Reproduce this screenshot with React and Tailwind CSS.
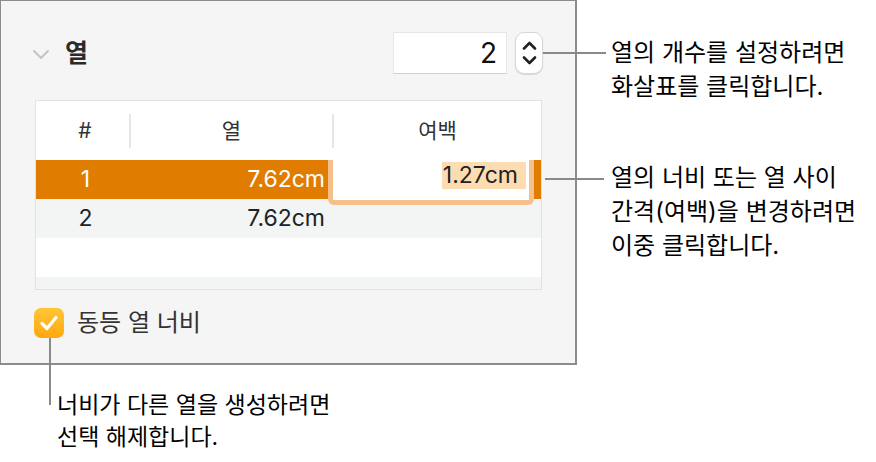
import React from "react";

const font = "font-['Inter','Noto_Sans_CJK_KR',sans-serif]";

function Chevron({ up }) {
  return (
    <svg width="15" height="9" viewBox="0 0 15 9" fill="none">
      <path
        d={up ? "M2 7.5 L7.5 2 L13 7.5" : "M2 1.5 L7.5 7 L13 1.5"}
        stroke="#222"
        strokeWidth="2.6"
        strokeLinecap="round"
        strokeLinejoin="round"
      />
    </svg>
  );
}

export default function App() {
  return (
    <div className={`relative w-[876px] h-[462px] bg-white flex ${font} text-[#222]`}>
      {/* Left column */}
      <div className="flex flex-col w-[600px]">
        <div className="w-[577px] h-[365px] bg-[#f5f5f5] border-t border-l border-r-2 border-b-2 border-[#8c8c8c] flex flex-col">
          {/* header */}
          <div className="flex items-center h-[42px] mt-[31px] pl-[31px] pr-[32px]">
            <svg width="18" height="11" viewBox="0 0 18 11" fill="none" className="mt-[2px]">
              <path d="M2 2 L9 9 L16 2" stroke="#c4c4c4" strokeWidth="2" strokeLinecap="round" strokeLinejoin="round" />
            </svg>
            <span className="ml-[15px] text-[25px] font-semibold text-[#2a2a2a] leading-none">열</span>
            <div className="flex-1" />
            <div className="w-[114px] h-[42px] bg-white border border-[#e6e6e6] border-b-[#cfcfcf] flex items-center justify-end pr-[9px] text-[28px] leading-none text-[#111]">
              2
            </div>
            <div className="ml-[8px] w-[28px] h-[42px] bg-white rounded-[9px] border border-[#d6d6d6] shadow-[0_1px_1px_rgba(0,0,0,0.12)] flex flex-col items-center justify-center gap-[6px]">
              <Chevron up />
              <Chevron />
            </div>
          </div>

          {/* table */}
          <div className="ml-[34px] mt-[26px] w-[507px] h-[190px] border border-[#e2e2e2] bg-white flex flex-col">
            <div className="h-[59px] flex items-center text-[21px] text-[#333]">
              <div className="w-[93px] text-center pl-[5px]">#</div>
              <div className="w-[2px] h-[34px] bg-[#e6e6e6]" />
              <div className="w-[201px] text-center">열</div>
              <div className="w-[2px] h-[34px] bg-[#e6e6e6]" />
              <div className="flex-1 text-center">여백</div>
            </div>
            <div className="h-[39px] flex items-center bg-[#e07c00] text-white text-[23px] relative">
              <div className="w-[93px] text-center pl-[6px]">1</div>
              <div className="w-[203px] text-right pr-[7px]">7.62cm</div>
              <div className="flex-1 relative h-full">
                <div className="absolute left-[-4px] top-0 w-[206px] h-[45px] border-l-[5px] border-r-[5px] border-b-[5px] border-[#f5c08c] rounded-b-[6px] bg-white z-10 flex items-start justify-end pr-[3px] pt-[2px]">
                  <span className="bg-[#fedcb2] text-[#222] h-[27px] flex items-center pl-[1px] pr-[8px]">1.27cm</span>
                </div>
              </div>
            </div>
            <div className="h-[39px] flex items-center bg-[#f3f4f4] text-[23px] text-[#222]">
              <div className="w-[93px] text-center pl-[6px]">2</div>
              <div className="w-[203px] text-right pr-[7px]">7.62cm</div>
            </div>
            <div className="h-[39px] bg-white" />
            <div className="flex-1 bg-[#f3f4f4]" />
          </div>

          {/* checkbox */}
          <div className="flex items-center ml-[33px] mt-[18px]">
            <div className="w-[30px] h-[30px] rounded-[7px] bg-gradient-to-b from-[#ffc634] to-[#ffa80a] flex items-center justify-center">
              <svg width="20" height="18" viewBox="0 0 20 18" fill="none">
                <path d="M3 9.5 L8 14.5 L17 3.5" stroke="white" strokeWidth="3.2" strokeLinecap="round" strokeLinejoin="round" />
              </svg>
            </div>
            <span className="ml-[13px] text-[24px] text-[#333] leading-none">동등 열 너비</span>
          </div>
        </div>

        <div className="mt-[24px] pl-[57px] text-[23px] leading-[32px] text-black">
          <div>너비가 다른 열을 생성하려면</div>
          <div>선택 해제합니다.</div>
        </div>
      </div>

      {/* Right annotations */}
      <div className="flex flex-col pl-[11px] text-[24px] leading-[34px] text-black">
        <div className="mt-[36px]">
          <div>열의 개수를 설정하려면</div>
          <div>화살표를 클릭합니다.</div>
        </div>
        <div className="mt-[57px]">
          <div>열의 너비 또는 열 사이</div>
          <div>간격(여백)을 변경하려면</div>
          <div>이중 클릭합니다.</div>
        </div>
      </div>

      {/* leader lines */}
      <div className="absolute left-[543px] top-[52px] w-[63px] h-[2px] bg-[#8a8a8a]" />
      <div className="absolute left-[545px] top-[178px] w-[59px] h-[2px] bg-[#8a8a8a]" />
      <div className="absolute left-[49px] top-[338px] w-[2px] h-[67px] bg-[#8a8a8a]" />
    </div>
  );
}
